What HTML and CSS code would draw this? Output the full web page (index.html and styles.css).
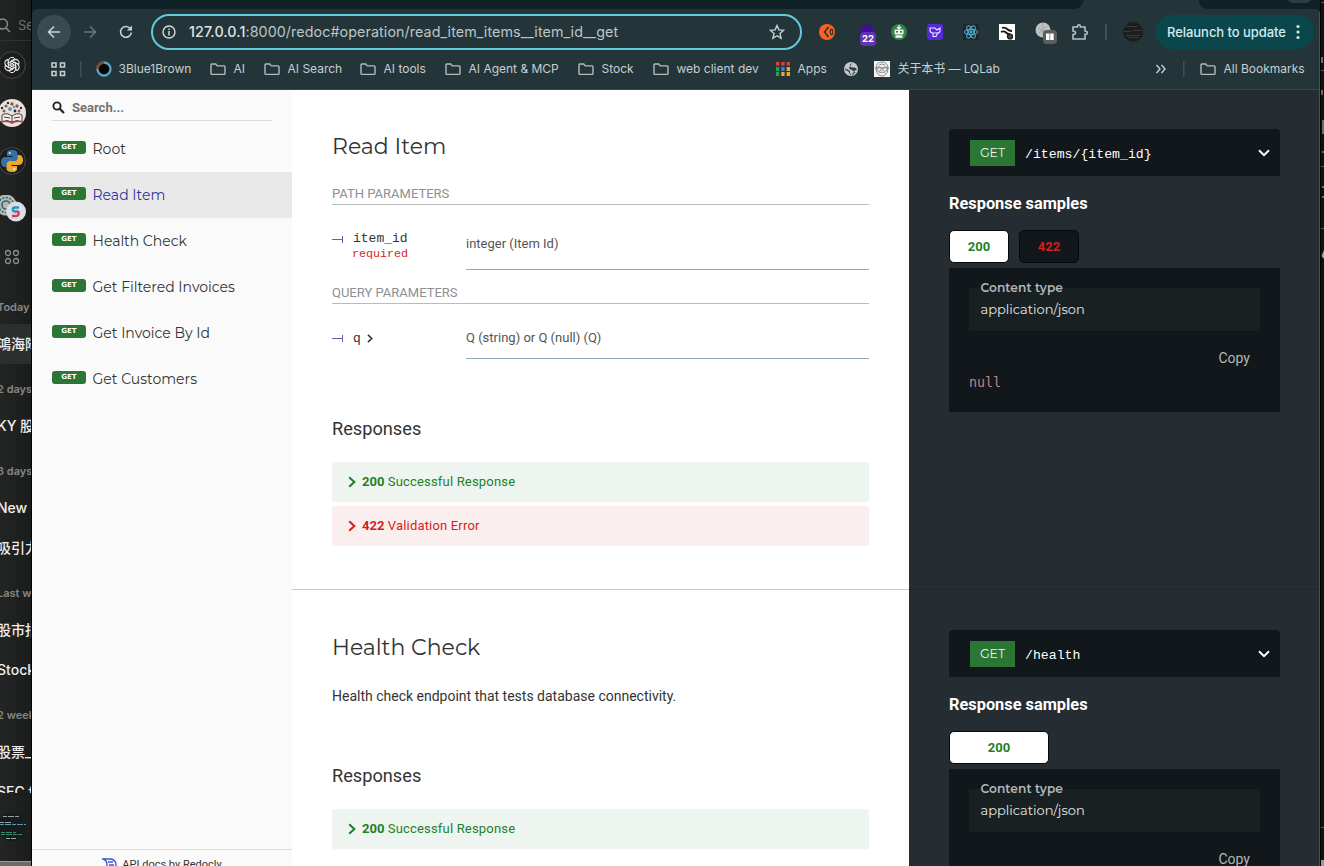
FILE: index.html
```
<!DOCTYPE html>
<html lang="en">
<head>
<meta charset="utf-8">
<title>API docs</title>
<link rel="stylesheet" href="styles.css">
</head>
<body>
<svg width="0" height="0" class="defs">
  <symbol id="folder" viewBox="0 0 16 13"><path d="M1 1.8Q1 1 1.8 1H5.7L7.3 2.9H14.2Q15 2.9 15 3.7V10.6Q15 11.4 14.2 11.4H1.8Q1 11.4 1 10.6Z" fill="none" stroke="currentColor" stroke-width="1.4"/></symbol>
  <symbol id="right" viewBox="0 0 8 12"><path d="M1.2 1.2L6.4 6L1.2 10.8" fill="none" stroke="currentColor" stroke-width="2"/></symbol>
  <symbol id="down" viewBox="0 0 12 8"><path d="M1 1.2L6 6.2L11 1.2" fill="none" stroke="currentColor" stroke-width="2"/></symbol>
  <symbol id="mark" viewBox="0 0 12 8"><path d="M0 4.5H10.5M10.5 1V8" fill="none" stroke="#6360b0" stroke-width="1"/></symbol>
</svg>
<div class="desktop">
  <aside class="chats">
    <div class="find"><svg width="14" height="16" viewBox="0 0 14 16" fill="none" stroke="#8b8d8c" stroke-width="1.4"><circle cx="4.5" cy="7" r="5"/><path d="M8 11L12 15"/></svg><span>Search</span></div>
    <div class="app"><svg width="28" height="28" viewBox="-14 -14 28 28"><circle r="13.4" fill="#1c1e1e" stroke="#464948"/><g fill="none" stroke="#ededed" stroke-width="1"><path id="petal" d="M-3.400 3.200V-4.200A3.400 3.400 0 0 1 2.800 -6.200L-1.200 -3.800V.8"/><use href="#petal" transform="rotate(60)"/><use href="#petal" transform="rotate(120)"/><use href="#petal" transform="rotate(180)"/><use href="#petal" transform="rotate(240)"/><use href="#petal" transform="rotate(300)"/></g></svg></div>
    <div class="app"><svg width="28" height="28" viewBox="-14 -14 28 28"><circle r="14" fill="#e9e2dc"/><g fill="#5b6c76"><circle cx="-6" cy="-7" r="1.6"/><circle cx="0" cy="-9" r="1.7" fill="#a14b43"/><circle cx="5" cy="-7" r="1.7"/><circle cx="-2" cy="-4" r="2" fill="#56a1ac"/><circle cx="7" cy="-2" r="1.5" fill="#ae4f49"/><circle cx="-8" cy="-2" r="1.5" fill="#a84d49"/><circle cx="3" cy="-2" r="1.4" fill="#272b2e"/><circle cx="-4" cy="-10" r="1.2" fill="#272b2e"/><circle cx="9" cy="-5" r="1.2" fill="#272b2e"/><circle cx="-10" cy="-5" r="1.2" fill="#272b2e"/><circle cx="2" cy="-6" r="1.2" fill="#56a1ac"/></g><path d="M-10 2Q-5 -1 0 3Q5 -1 10 2V9Q5 6 0 9Q-5 6 -10 9ZM0 3V9M-8 4L-2 5M8 4L2 5" fill="#f5efe7" stroke="#46393b"/><path d="M-11 9Q-5 7 0 10Q5 7 11 9" fill="none" stroke="#b34a4a" stroke-width="1.6"/></svg></div>
    <div class="app"><svg width="28" height="28" viewBox="-14 -14 28 28"><circle r="13.4" fill="#1c1e1e" stroke="#464948"/><path d="M0 -11C-5 -11 -5 -9 -5 -7.5V-5H.5V-4H-7C-10 -4 -11 -1 -11 1C-11 4 -9.5 6 -7.5 6H-5.5V3C-5.500 1 -4 0 -2 0H2.500C4 0 5.500 -1.500 5.500 -3V-7.500C5.500 -10 3 -11 0 -11Z" fill="#3272a8"/><path d="M0 -11C-5 -11 -5 -9 -5 -7.5V-5H.5V-4H-7C-10 -4 -11 -1 -11 1C-11 4 -9.5 6 -7.5 6H-5.5V3C-5.500 1 -4 0 -2 0H2.500C4 0 5.500 -1.500 5.500 -3V-7.500C5.500 -10 3 -11 0 -11Z" fill="#e7a930" transform="rotate(180)"/><circle cx="-2.300" cy="-8" r="1" fill="#e8f3fa"/><circle cx="2.300" cy="8" r="1" fill="#fff6df"/></svg></div>
    <div class="app"><svg width="28" height="28" viewBox="-14 -14 28 28"><circle cx="-6" cy="-4" r="10.500" fill="#b9b8aa"/><g fill="none" stroke="#276b87" stroke-width="1.600"><circle cx="-6" cy="-4" r="7.500" stroke-dasharray="2 1.500"/><circle cx="-6" cy="-4" r="4"/></g><circle cx="4" cy="2.500" r="10" fill="#dcdee6"/><path d="M7 -1.500H3C0 -1.500 0 2.500 3 2.500" fill="none" stroke="#2790c8" stroke-width="2.300"/><path d="M3 2.500H5C8 2.500 7 7 4 7H0" fill="none" stroke="#e03860" stroke-width="2.300"/><path d="M2 2.500H6" stroke="#2eaa63" stroke-width="2"/></svg></div>
    <div class="app"><svg width="28" height="28" viewBox="-14 -14 28 28" fill="none" stroke="#8b8e8c" stroke-width="1.300"><circle cx="-4" cy="-4" r="2.500"/><circle cx="4" cy="-4" r="2.500"/><circle cx="-4" cy="4" r="2.500"/><circle cx="4" cy="4" r="2.500"/></svg></div>
    <h4>Today</h4><p class="on">鴻海降</p>
    <h4>2 days ago</h4><p>KY 股票</p>
    <h4>3 days ago</h4><p>New chat</p><p>吸引力</p>
    <h4>Last week</h4><p>股市指</p><p>Stock</p>
    <h4>2 weeks</h4><p>股票_</p><p class="cut">SEC filing</p>
    <svg class="me" width="28" height="28" viewBox="0 0 28 28"><circle cx="14" cy="14" r="14" fill="#191b1c"/><g stroke-dasharray="4 1 6 1" fill="none"><path d="M5 3.500H21M2 9.500H14" stroke="#9aa0a0"/><path d="M2 11.500H28" stroke="#559bb7"/><path d="M3 19.500H18M3 21.500H24" stroke="#338d68"/><path d="M8 25.500H18" stroke="#9aa"/></g></svg>
    <div class="dock"></div>
  </aside>
  <div class="window">
    <header class="chrome">
      <svg class="tabs" width="1288" height="9" viewBox="0 0 1288 9"><path d="M0 0H1051.500Q1050 9 1042 9H6Q1 9 0 14Z" fill="#0f2226"/><path d="M1166.500 0Q1168 9 1176 9H1282Q1287 9 1288 13V0Z" fill="#0f2226"/><path d="M1256 0H1279Q1277 3 1273 3H1262Q1258 3 1256 0Z" fill="#2b3d41"/></svg>
      <div class="bar">
        <span class="back"><svg width="16" height="16" viewBox="0 0 16 16"><path d="M14 8H3M8 2.500L2.500 8L8 13.500" fill="none" stroke="#c2d6da" stroke-width="1.600"/></svg></span>
        <span><svg width="16" height="16" viewBox="0 0 16 16"><path d="M2 8H13M8 2.500L13.500 8L8 13.500" fill="none" stroke="#64777c" stroke-width="1.600"/></svg></span>
        <span><svg width="16" height="16" viewBox="0 0 16 16"><path d="M13.300 8.600A5.400 5.400 0 1 1 11.900 4.200L13.400 5.700" fill="none" stroke="#c2d6da" stroke-width="1.600"/><path d="M14 1.500V6.500H9Z" fill="#c2d6da"/></svg></span>
        <div class="omni">
          <svg width="14" height="14" viewBox="0 0 14 14"><circle cx="7" cy="7" r="6" fill="none" stroke="#d4dcdd" stroke-width="1.400"/><path d="M7 6V10.500M7 3.500V5" stroke="#d4dcdd" stroke-width="1.500"/></svg>
          <span class="url"><b>127.0.0.1</b>:8000/redoc#operation/read_item_items__item_id__get</span>
          <svg width="16" height="16" viewBox="0 0 16 16"><path d="M8 1.500L9.900 5.900L14.700 6.300L11 9.500L12.100 14.200L8 11.700L3.900 14.200L5 9.500L1.300 6.300L6.100 5.900Z" fill="none" stroke="#c5cfd1" stroke-width="1.400"/></svg>
        </div>
        <span><svg width="16" height="16" viewBox="0 0 16 16"><circle cx="8" cy="8" r="8" fill="#fa6120"/><path d="M9.500 3L5.500 8L9.500 13" fill="none" stroke="#1e2d31" stroke-width="1.400"/><ellipse cx="12.500" cy="8" rx="1.300" ry="2.600" fill="none" stroke="#1e2d31" stroke-width="1.100"/></svg></span>
        <span class="badged"><svg width="16" height="16" viewBox="0 0 16 16"><path d="M0 5L8 0L16 5L8 10Z" fill="#410b9d"/><path d="M1 8L8 12L12 10V13H6L1 10Z" fill="#22125b"/></svg><i>22</i></span>
        <span><svg width="16" height="16" viewBox="0 0 16 16"><circle cx="8" cy="8" r="8" fill="#388049"/><path d="M8 1V5M6 3L8 5L10 3" stroke="#f1f6ef" stroke-width="1.200" fill="none"/><rect x="3.500" y="5.500" width="9" height="5" rx="1" fill="#f1f6ef"/><rect x="5" y="7" width="2" height="1.600" fill="#388049"/><rect x="9" y="7" width="2" height="1.600" fill="#388049"/><rect x="4.500" y="11.300" width="7" height="2.500" fill="#f1f6ef"/></svg></span>
        <span><svg width="16" height="16" viewBox="0 0 16 16"><rect width="16" height="16" rx="3" fill="#5629dc"/><path d="M3 4H8L10 6L13 4V7Q13 9 10 9H6Q3 9 3 6ZM6 9V12.500H9L10.500 9" fill="none" stroke="#eee6ff" stroke-width="1.100"/></svg></span>
        <span><svg width="16" height="16" viewBox="-8 -8 16 16"><rect x="-8" y="-8" width="16" height="16" fill="#20262b"/><g fill="none" stroke="#4eb5d7" stroke-width="1"><ellipse rx="6.800" ry="2.600"/><ellipse rx="6.800" ry="2.600" transform="rotate(60)"/><ellipse rx="6.800" ry="2.600" transform="rotate(120)"/></g><circle r="1.400" fill="#4eb5d7"/></svg></span>
        <span><svg width="16" height="16" viewBox="0 0 16 16"><rect width="16" height="16" fill="#fff"/><path d="M3 4Q6 3 8 5T13 7M2 8Q5 6.500 7 8.500T11 10" fill="none" stroke="#151515" stroke-width="1.800"/><circle cx="11" cy="12.500" r="2.500" fill="#4b4b4b" stroke="#111" stroke-width="1.200"/></svg></span>
        <span><svg width="24" height="24" viewBox="0 0 24 24"><circle cx="9" cy="10" r="7.500" fill="#bfc1c1"/><path d="M4 8L14 13M5 13L13 6M9 3V16" stroke="#a3a6a6"/><rect x="9" y="10" width="14" height="14" rx="4" fill="#5d5d5d"/><path d="M12 13.500H15.500V20H12ZM16.200 13.500H19.700V20H16.200Z" fill="#fff"/></svg></span>
        <span><svg width="18" height="18" viewBox="0 0 18 18"><path d="M2 4H6.500Q6.500 1.700 8 1.700T9.500 4H14V8Q16.300 8 16.300 9.700T14 11.400V16H2V11.500Q4.500 11.500 4.500 9.800T2 8Z" fill="none" stroke="#a9c5ca" stroke-width="1.600"/></svg></span>
        <span><svg width="2" height="16"><rect width="2" height="16" fill="#3d5156"/></svg></span>
        <span><svg width="20" height="20" viewBox="0 0 20 20"><circle cx="10" cy="10" r="10" fill="#1c1e1e"/><path d="M3 4.500H14M1 9.500H8M9 8.500H19M3 13.500H17" stroke="#3c3a39"/><path d="M5 15.500H16" stroke="#2c4133"/></svg></span>
        <div class="relaunch">Relaunch to update<svg width="6" height="16" viewBox="0 0 6 16" fill="#d0eaee"><circle cx="3" cy="2.500" r="1.600"/><circle cx="3" cy="8" r="1.600"/><circle cx="3" cy="13.500" r="1.600"/></svg></div>
      </div>
      <nav class="marks">
        <span><svg width="16" height="16" viewBox="0 0 16 16"><path d="M2 2H6V6H2ZM10.500 2H14.500V6H10.500ZM2 10.500H6V14.500H2ZM10.500 10.500H14.500V14.500H10.500Z" fill="none" stroke="#c5cfd1" stroke-width="1.600"/></svg></span>
        <span><svg width="2" height="16"><rect width="1.500" height="16" fill="#3d5156"/></svg></span>
        <span><svg class="blue" width="16" height="16" viewBox="0 0 16 16"><circle cx="8" cy="8" r="6.500" fill="#050707" stroke="#5b9fc4" stroke-width="2.400"/><path d="M1.500 8A6.500 6.500 0 0 1 8 1.500" fill="none" stroke="#84492a" stroke-width="2.600"/></svg><em>3Blue1Brown</em></span>
        <span><svg class="f"><use href="#folder"/></svg><em>AI</em></span>
        <span><svg class="f"><use href="#folder"/></svg><em>AI Search</em></span>
        <span><svg class="f"><use href="#folder"/></svg><em>AI tools</em></span>
        <span><svg class="f"><use href="#folder"/></svg><em>AI Agent &amp; MCP</em></span>
        <span><svg class="f"><use href="#folder"/></svg><em>Stock</em></span>
        <span><svg class="f"><use href="#folder"/></svg><em>web client dev</em></span>
        <span><svg class="grid" width="14" height="14" viewBox="0 0 14 14"><path d="M0 1.700H14" stroke="#ed3a36" stroke-width="3.400" stroke-dasharray="3.300 2"/><path d="M0 7H4M0 12H4" stroke="#2d9c55" stroke-width="3.800" stroke-dasharray="3.300 9"/><path d="M5.300 7H8.600" stroke="#3680ef" stroke-width="3.800"/><path d="M10.600 7H14M5.300 12H8.600M10.600 12H14" stroke="#f1a52c" stroke-width="3.800"/></svg><em>Apps</em></span>
        <span><svg width="16" height="16" viewBox="0 0 16 16"><circle cx="8" cy="8" r="7" fill="#c4c8cd"/><path d="M9 2.200L7 3.500V5.500L9 6.500H12L14 8.500L12 9.500L10 12L8.500 13.800L7 12V10L4.500 8.500L2.200 7.500L2.500 9L5.500 10.500L7 13.500L9.500 13.800L12.500 11.500L10 10L8.500 8.500H7L6 7" fill="#2d3c40" fill-rule="evenodd"/></svg></span>
        <span><svg width="16" height="16" viewBox="0 0 16 16"><rect width="16" height="16" fill="#f5f5f5"/><g fill="none" stroke="#747474" stroke-width=".8"><path d="M2 8Q2 1 8 1T14 8Q13 15 8 15T2 8M1 7H15"/><circle cx="5" cy="8" r="2.300"/><circle cx="11" cy="8" r="2.300"/><path d="M5 12Q8 10 11 12M5 4Q8 2 11 4"/></g></svg><em class="cjk">关于本书 — LQLab</em></span>
        <span><svg width="12" height="10" viewBox="0 0 12 10"><path d="M1.500 1L5 5L1.500 9M6.500 1L10 5L6.500 9" fill="none" stroke="#c5cfd1" stroke-width="1.400"/></svg></span>
        <span><svg width="2" height="16"><rect width="1.500" height="16" fill="#3d5156"/></svg></span>
        <span><svg class="f"><use href="#folder"/></svg><em>All Bookmarks</em></span>
      </nav>
    </header>
    <div class="page">
      <aside class="menu">
        <div class="search"><svg width="13" height="13" viewBox="0 0 13 13"><circle cx="5" cy="5" r="3.600" fill="none" stroke="#222" stroke-width="1.900"/><path d="M7.500 7.500L12 12" stroke="#222" stroke-width="2.200"/></svg><span>Search...</span></div>
        <ul>
          <li><i>GET</i><a>Root</a></li>
          <li class="active"><i>GET</i><a>Read Item</a></li>
          <li><i>GET</i><a>Health Check</a></li>
          <li><i>GET</i><a>Get Filtered Invoices</a></li>
          <li><i>GET</i><a>Get Invoice By Id</a></li>
          <li><i>GET</i><a>Get Customers</a></li>
        </ul>
        <div class="credit"><svg width="16" height="13" viewBox="0 0 16 13"><path d="M0 1H9Q14 2 14 7V13M1 1Q5 2 5 7V11M6 4H11M7 7H12M7 10H12" fill="none" stroke="#315fcb" stroke-width="1.400"/></svg><span>API docs by Redocly</span></div>
      </aside>
      <div class="docs">
        <section class="op first">
          <div class="left">
            <h2>Read Item</h2>
            <h5>PATH PARAMETERS</h5>
            <div class="param tall"><div class="name"><svg width="12" height="8"><use href="#mark"/></svg><div><code>item_id</code><small>required</small></div></div><div class="type">integer (Item Id)</div></div>
            <h5 class="query">QUERY PARAMETERS</h5>
            <div class="param"><div class="name"><svg width="12" height="8"><use href="#mark"/></svg><div><code>q</code></div><svg class="more" width="6" height="9"><use href="#right"/></svg></div><div class="type">Q (string) or Q (null) (Q)</div></div>
            <h3>Responses</h3>
            <div class="resp ok"><svg width="8" height="12"><use href="#right"/></svg><b>200</b> Successful Response</div>
            <div class="resp err"><svg width="8" height="12"><use href="#right"/></svg><b>422</b> Validation Error</div>
          </div>
          <div class="right">
            <div class="endpoint"><i>GET</i><code>/items/{item_id}</code><svg width="12" height="8"><use href="#down"/></svg></div>
            <h3>Response samples</h3>
            <div class="codes"><b class="sel">200</b><b class="bad">422</b></div>
            <div class="sample"><div class="ctype"><strong>Content type</strong><span>application/json</span></div><div class="copy">Copy</div><pre>null</pre></div>
          </div>
        </section>
        <section class="op second">
          <div class="left">
            <h2>Health Check</h2>
            <p>Health check endpoint that tests database connectivity.</p>
            <h3>Responses</h3>
            <div class="resp ok"><svg width="8" height="12"><use href="#right"/></svg><b>200</b> Successful Response</div>
          </div>
          <div class="right">
            <div class="endpoint"><i>GET</i><code>/health</code><svg width="12" height="8"><use href="#down"/></svg></div>
            <h3>Response samples</h3>
            <div class="codes"><b class="sel wide">200</b></div>
            <div class="sample"><div class="ctype"><strong>Content type</strong><span>application/json</span></div><div class="copy">Copy</div><pre>null</pre></div>
          </div>
        </section>
      </div>
    </div>
  </div>
  <div class="behind"><svg width="4" height="866" viewBox="0 0 4 866"><path d="M0 0H1V866H0Z" fill="#000"/><path d="M1 2.500H4M1 70.500H4M1 166.500H4M1 228.500H4M1 827.500H4" stroke="#55534f"/><path d="M2 57V63M2 90V95M3 120V134M2 152H4M2 187H4M2 197H4" stroke="#8a8884" stroke-width="1.500"/><path d="M4 250L1.500 256L4 259" fill="#a7a5a1"/><path d="M1 860H4V866H1Z" fill="#999"/></svg></div>
</div>
</body>
</html>
```

FILE: styles.css
```
* { box-sizing: border-box; margin: 0; padding: 0; }
html, body { height: 866px; overflow: hidden; background: #111; }
body { font-family: Roboto, sans-serif; }
i, em { font-style: normal; }
svg { display: block; flex: none; }
.defs { position: absolute; }
.desktop { display: flex; width: 1324px; height: 866px; overflow: hidden; }

/* conversation list behind the browser */
.chats { width: 32px; height: 866px; overflow: hidden; background: linear-gradient(90deg, #232524, #1b1d1c); border-right: 1px solid #000; font-family: Inter, "Noto Sans CJK SC", sans-serif; display: flex; flex-direction: column; white-space: nowrap; }
.chats > * { flex: none; }
.find { height: 41px; padding-top: 9px; border-bottom: 1px solid #303231; color: #6f7170; font-size: 13px; display: flex; align-items: center; }
.find span { margin-left: 6px; }
.find svg { margin-left: -2px; }
.app { height: 48px; display: flex; align-items: center; margin-left: -2px; }
.chats h4 { height: 42px; line-height: 50px; font-size: 11px; font-weight: 600; color: #858786; text-indent: -3px; }
.app:nth-child(6) { margin-bottom: 1px; }
.chats p { height: 40px; line-height: 40px; font-size: 14px; font-weight: 500; color: #eee; text-indent: -3px; overflow: hidden; }
.chats p.on { background: #2d2f2e; }
.chats p.cut { height: 21px; }
.me { margin: 20px 0 20px -2px; }
.dock { height: 5px; background: #6b6b6b; border-top: 1px solid #999; }

/* browser frame */
.window { width: 1288px; height: 866px; border-right: 1px solid #475257; flex: none; }
.chrome { height: 90px; background: #243539; border-bottom: 1px solid #3a474a; color: #c5cfd1; font-family: Inter, "Noto Sans CJK SC", sans-serif; }
.tabs { height: 9px; overflow: visible; }
.bar { display: grid; grid-template-columns: 34px 38px 42px 651px 50px 30px 34px 38px 34px 38px 40px 28px 24px 37px 159px; padding-left: 5px; height: 46px; align-items: center; }
.bar > span { display: flex; justify-content: center; align-items: center; }
.bar > span:nth-child(3) { padding-right: 9px; }
.bar > span:nth-child(14) { padding-right: 7px; }
.bar .back { height: 34px; border-radius: 17px; background: #394b50; }
.omni { height: 36px; border: 2px solid #62cbd9; border-radius: 18px; display: flex; align-items: center; padding: 0 15px 0 9px; }
.url { flex: 1; margin: -1px 0 0 13px; font-size: 14.3px; color: #bcc6c8; white-space: nowrap; letter-spacing: .08px; }
.url b { font-weight: 500; color: #dde4e5; }
.badged { position: relative; }
.badged i { position: absolute; left: 8px; top: 8px; width: 16px; height: 14px; border-radius: 4px; background: #6233b4; color: #fff; font: 700 9.5px/14px Inter, sans-serif; text-align: center; }
.relaunch { height: 34px; border-radius: 17px; background: #0b464c; color: #d0eaee; font-size: 13px; font-weight: 500; letter-spacing: -.05px; display: flex; align-items: center; justify-content: space-between; padding: 0 13px 0 12px; white-space: nowrap; }
.marks { display: grid; grid-template-columns: 30px 15px 114px 54px 96px 85px 133px 75px 123px 68px 31px 281px 28px 16px 120px; padding-left: 18px; height: 28px; align-items: center; font-size: 12px; }
.marks span { display: flex; align-items: center; gap: 7.5px; white-space: nowrap; }
.marks .f { width: 16px; height: 13px; margin-left: 1px; color: #b2bdbf; }
.marks .blue { margin-left: 1px; margin-right: -1px; }
.marks .grid { margin-left: 1px; }
.marks em { line-height: 16px; }
.marks .cjk { letter-spacing: -.08px; }

/* docs page */
.page { height: 776px; display: flex; background: #fff; overflow: hidden; }
.menu { width: 260px; background: #fafafa; display: flex; flex-direction: column; height: 776px; overflow: hidden; flex: none; }
.search { height: 31px; margin: 0 20px 5px; border-bottom: 1px solid #dcdcdc; display: flex; align-items: center; padding-top: 4px; gap: 7px; color: #737373; font: 700 13px Roboto, sans-serif; }
.menu ul { list-style: none; flex: 1; }
.menu li { height: 46px; padding-left: 20px; display: flex; align-items: flex-start; font: 400 14px/47px Montserrat, Inter, sans-serif; color: #333; }
.menu li.active { background: #e9e9e9; color: #32329f; }
.menu li i { width: 34px; height: 13px; margin: 15px 6.5px 0 0; border-radius: 3px; background: #2b7634; color: #fff; font: 700 7px/13px "DejaVu Sans", sans-serif; text-align: center; }
.credit { height: 17px; border-top: 1px solid #dedede; display: flex; justify-content: center; padding: 8px 0 0; font-size: 11px; line-height: 14px; color: #333; gap: 4px; }
.docs { flex: 1; min-width: 0; }
.op { display: flex; }
.first { height: 500px; }
.second { height: 501px; }
.left { width: 617px; flex: none; padding: 40px 40px 0; border-bottom: 1px solid #c8c8c8; color: #333; }
.right { flex: 1; background: #252d32; padding: 39px 39px 0 40px; border-bottom: 1px solid #202728; color: #fff; }
.second .left { padding-top: 41px; }
.second .right { padding-top: 40px; }
.left h2 { height: 32px; font: 400 22px/34px Montserrat, Inter, sans-serif; }
.left h5 { height: 21px; margin-top: 22px; border-bottom: 1px solid #b9bbbd; font: 400 13px/20px Roboto, sans-serif; color: #8d8f91; }
.left h5.query { margin-top: 13px; }
.param { height: 55px; display: grid; grid-template-columns: 134px 1fr; grid-template-rows: 55px; }
.param.tall { height: 65px; grid-template-rows: 65px; }
.name { display: flex; align-items: center; padding-top: 13px; }
.tall .name { align-items: flex-start; padding-top: 0; }
.tall .name > svg { margin-top: 30px; }
.tall .name > div { padding-top: 26px; }
.name > div { padding-left: 9px; }
.name code { display: block; font: 13px/15px "Courier New", "Liberation Mono", monospace; }
.name small { display: block; font: 11.7px/16px "Courier New", "Liberation Mono", monospace; color: #d41f1c; margin-left: -1px; }
.more { margin-left: 6px; }
.type { border-bottom: 1px solid #95acb6; font-size: 13px; line-height: 67px; color: #555; }
.tall .type { line-height: 77px; }
.left h3 { height: 30px; margin: 55px 0 18px; font: 400 18.2px/30px Roboto, sans-serif; }
.left p { height: 20px; margin-top: 23px; font-size: 14px; line-height: 20px; }
.resp { height: 40px; margin-bottom: 4px; border-radius: 2px; display: flex; align-items: center; padding: 0 0 1px 16px; font-size: 13px; letter-spacing: .18px; white-space: pre; }
.resp b { letter-spacing: 0; }
.resp svg { margin: 1px 6px 0 0; }
.ok { color: #1d8127; background: #eef5f1; }
.err { color: #d41f1c; background: #fbeeee; }
.endpoint { height: 47px; background: #11171a; border-radius: 4px 4px 0 0; display: flex; align-items: center; padding: 0 10px 0 21px; }
.endpoint i { width: 45px; height: 26px; background: #2b7634; color: #e9f5e9; font: 400 12.5px/26px Montserrat, Inter, sans-serif; text-align: center; margin-top: 1px; }
.endpoint code { flex: 1; margin-left: 10px; font: 13.2px/20px "Courier New", "Liberation Mono", monospace; padding-top: 4px; }
.right h3 { height: 20px; margin: 18px 0 16px; font: 700 16.35px/20px Roboto, sans-serif; }
.codes { display: flex; gap: 10px; margin-bottom: 5px; }
.codes b { width: 60px; height: 33px; border: 1px solid #07090b; border-radius: 5px; background: #11171a; font-size: 13px; line-height: 31px; text-align: center; }
.codes .sel { background: #fff; color: #1d8127; }
.codes .bad { color: #d41f1c; }
.codes .wide { width: 100px; }
.sample { height: 144px; background: #11171a; padding: 20px 20px 0; }
.ctype { height: 43px; background: #182022; padding-left: 11.5px; font-family: Montserrat, Inter, sans-serif; }
.ctype strong { display: block; height: 13px; font-size: 12.2px; font-weight: 600; line-height: 14px; transform: translateY(-7px); color: #b4b7b8; letter-spacing: .05px; }
.ctype span { display: block; font-size: 13px; line-height: 16px; color: #e3e5e5; }
.copy { margin: 17px 10px 0 0; text-align: right; font-size: 14px; line-height: 20px; color: #b4b7b8; }
.sample pre { font: 13.3px/18px "DejaVu Sans Mono", monospace; color: #c38086; margin-top: 6px; }
.behind { width: 4px; background: #11100e; flex: none; }
```
